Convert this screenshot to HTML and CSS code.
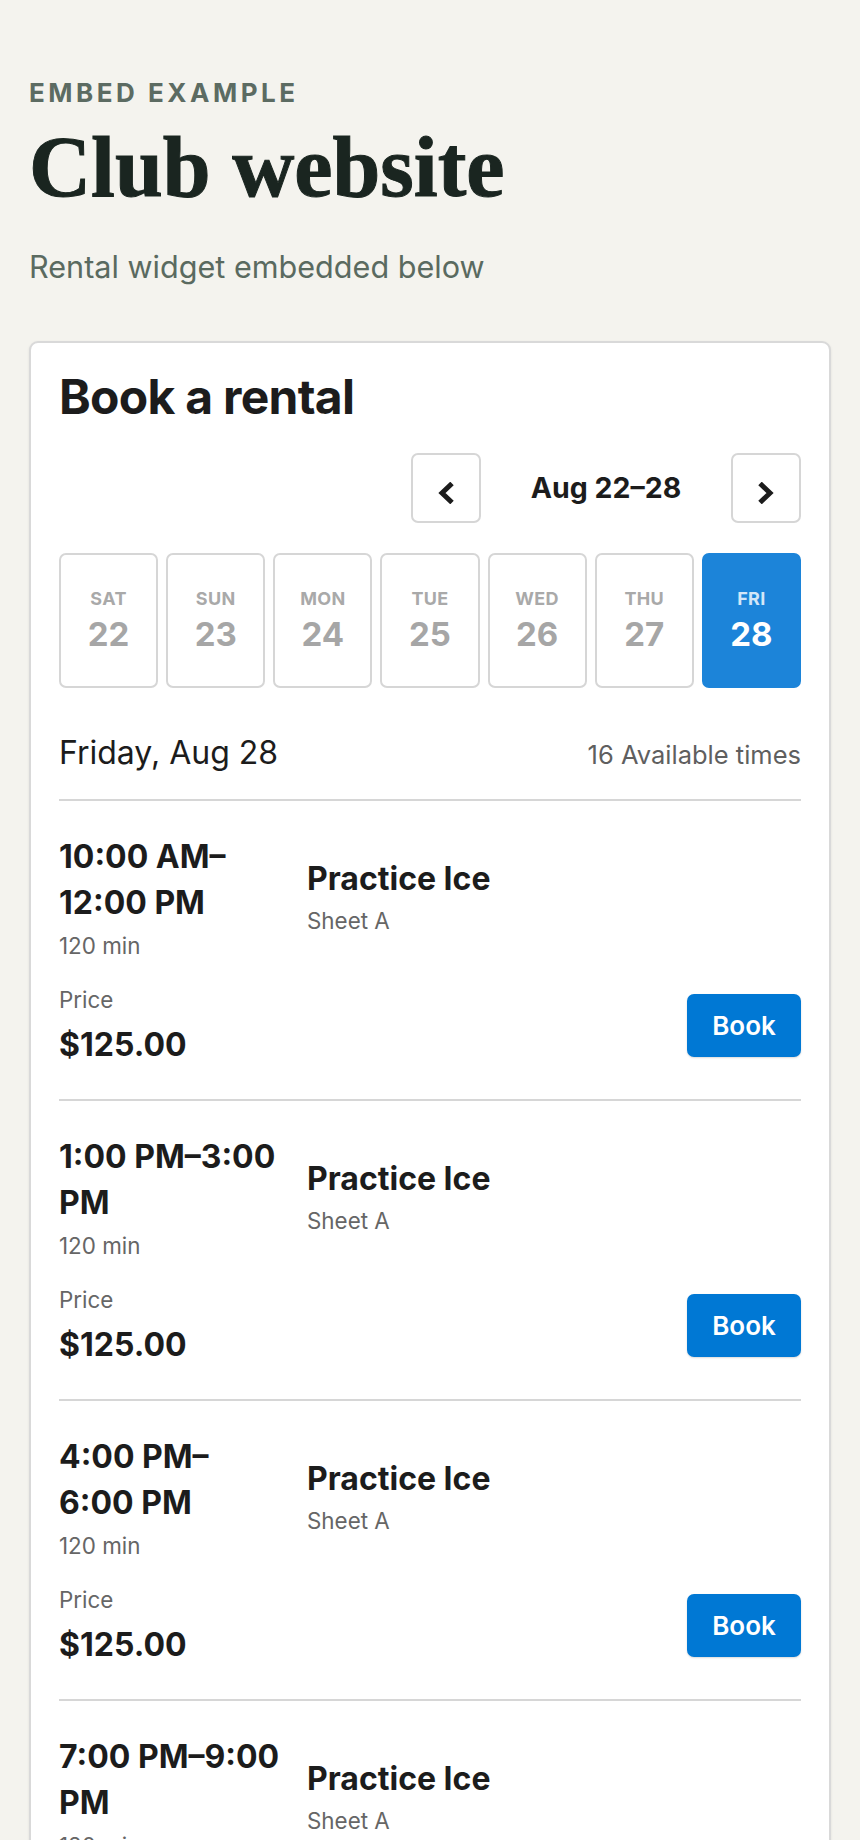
FILE: index.html
```html
<!DOCTYPE html>
<html lang="en">
<head>
    <meta charset="UTF-8">
    <meta name="viewport" content="width=device-width, initial-scale=1.0">
    <title>Club website</title>
    <link rel="stylesheet" href="styles.css">
</head>
<body>
    <header class="site-header">
        <p class="eyebrow">Embed example</p>
        <h1 class="site-title">Club website</h1>
        <p class="lead">Rental widget embedded below</p>
    </header>

    <section class="widget">
        <h2 class="widget-title">Book a rental</h2>

        <div class="week-nav">
            <button class="nav-btn" aria-label="Previous week">
                <svg width="18" height="22" viewBox="0 0 18 22"><path d="M15 1.5 L5 11 L15 20.5" fill="none" stroke="#1c1c1c" stroke-width="5"/></svg>
            </button>
            <div class="week-label">Aug 22–28</div>
            <button class="nav-btn" aria-label="Next week">
                <svg width="18" height="22" viewBox="0 0 18 22"><path d="M3 1.5 L13 11 L3 20.5" fill="none" stroke="#1c1c1c" stroke-width="5"/></svg>
            </button>
        </div>

        <div class="days">
            <button class="day"><span class="day-name">SAT</span><span class="day-num">22</span></button>
            <button class="day"><span class="day-name">SUN</span><span class="day-num">23</span></button>
            <button class="day"><span class="day-name">MON</span><span class="day-num">24</span></button>
            <button class="day"><span class="day-name">TUE</span><span class="day-num">25</span></button>
            <button class="day"><span class="day-name">WED</span><span class="day-num">26</span></button>
            <button class="day"><span class="day-name">THU</span><span class="day-num">27</span></button>
            <button class="day selected"><span class="day-name">FRI</span><span class="day-num">28</span></button>
        </div>

        <div class="day-head">
            <h3 class="day-title">Friday, Aug 28</h3>
            <span class="avail">16 Available times</span>
        </div>

        <div class="slot">
            <div class="slot-main">
                <div>
                    <div class="slot-time">10:00 AM–12:00 PM</div>
                    <div class="slot-length">120 min</div>
                </div>
                <div>
                    <div class="slot-name">Practice Ice</div>
                    <div class="slot-sheet">Sheet A</div>
                </div>
            </div>
            <div class="slot-foot">
                <div>
                    <div class="price-label">Price</div>
                    <div class="price">$125.00</div>
                </div>
                <button class="book-btn">Book</button>
            </div>
        </div>

        <div class="slot">
            <div class="slot-main">
                <div>
                    <div class="slot-time">1:00 PM–3:00 PM</div>
                    <div class="slot-length">120 min</div>
                </div>
                <div>
                    <div class="slot-name">Practice Ice</div>
                    <div class="slot-sheet">Sheet A</div>
                </div>
            </div>
            <div class="slot-foot">
                <div>
                    <div class="price-label">Price</div>
                    <div class="price">$125.00</div>
                </div>
                <button class="book-btn">Book</button>
            </div>
        </div>

        <div class="slot">
            <div class="slot-main">
                <div>
                    <div class="slot-time">4:00 PM–6:00 PM</div>
                    <div class="slot-length">120 min</div>
                </div>
                <div>
                    <div class="slot-name">Practice Ice</div>
                    <div class="slot-sheet">Sheet A</div>
                </div>
            </div>
            <div class="slot-foot">
                <div>
                    <div class="price-label">Price</div>
                    <div class="price">$125.00</div>
                </div>
                <button class="book-btn">Book</button>
            </div>
        </div>

        <div class="slot">
            <div class="slot-main">
                <div>
                    <div class="slot-time">7:00 PM–9:00 PM</div>
                    <div class="slot-length">120 min</div>
                </div>
                <div>
                    <div class="slot-name">Practice Ice</div>
                    <div class="slot-sheet">Sheet A</div>
                </div>
            </div>
            <div class="slot-foot">
                <div>
                    <div class="price-label">Price</div>
                    <div class="price">$125.00</div>
                </div>
                <button class="book-btn">Book</button>
            </div>
        </div>
    </section>
</body>
</html>
```

FILE: styles.css
```css
body {
    margin: 0;
    padding: 77px 29px 40px;
    background-color: #f4f3ee;
    font-family: Inter, "Noto Sans", Arial, sans-serif;
    color: #1c1c1c;
}
.eyebrow {
    margin: 0;
    font-size: 26px;
    line-height: 32px;
    font-weight: 700;
    letter-spacing: 0.135em;
    text-transform: uppercase;
    color: #5c6b62;
}
.site-title {
    margin: 10px 0 0;
    font-family: "Liberation Serif", "Times New Roman", serif;
    font-size: 86px;
    line-height: 96px;
    font-weight: 700;
    color: #1a2520;
    -webkit-text-stroke: 1px #1a2520;
}
.lead {
    margin: 32px 0 0;
    font-size: 30.6px;
    line-height: 40px;
    color: #5a6a60;
}
.widget {
    margin-top: 54px;
    background-color: white;
    border: 2px solid #d9d9d9;
    border-radius: 9px;
    padding: 25px 28px 28px;
    box-shadow: 0 1px 3px rgba(0, 0, 0, 0.08);
}
.widget-title {
    margin: 0;
    font-size: 48px;
    line-height: 58px;
    font-weight: 700;
    letter-spacing: -0.015em;
}
button {
    font-family: inherit;
    cursor: pointer;
}
.week-nav {
    display: flex;
    justify-content: flex-end;
    align-items: center;
    margin-top: 27px;
}
.nav-btn {
    width: 70px;
    height: 70px;
    box-sizing: border-box;
    padding: 0;
    border: 2px solid #d6d6d6;
    border-radius: 7px;
    background-color: white;
    display: flex;
    align-items: center;
    justify-content: center;
}
.nav-btn svg {
    margin-top: 10px;
}
.week-label {
    width: 250px;
    text-align: center;
    font-size: 28.5px;
    line-height: 34px;
    font-weight: 700;
}
.days {
    display: grid;
    grid-template-columns: repeat(7, 1fr);
    gap: 8px;
    margin-top: 30px;
}
.day {
    display: flex;
    flex-direction: column;
    align-items: center;
    padding: 33px 0 32px;
    border: 2px solid #d6d6d6;
    border-radius: 7px;
    background-color: white;
}
.day-name {
    font-size: 18px;
    line-height: 22px;
    font-weight: 700;
    letter-spacing: 0.02em;
    color: #a9a9a9;
}
.day-num {
    margin-top: 4px;
    font-size: 33px;
    line-height: 40px;
    font-weight: 700;
    color: #a6a6a6;
}
.day.selected {
    background-color: #1c84d9;
    border-color: #1c84d9;
}
.day.selected .day-name {
    color: #d2e6f8;
}
.day.selected .day-num {
    color: white;
}
.day-head {
    display: flex;
    justify-content: space-between;
    align-items: baseline;
    margin-top: 45px;
    padding-bottom: 26px;
    border-bottom: 2px solid #d6d6d6;
}
.day-title {
    margin: 0;
    font-size: 32px;
    line-height: 40px;
    font-weight: 400;
}
.avail {
    font-size: 25.5px;
    color: #5f5f5f;
}
.slot {
    padding: 33px 0 34px;
    border-bottom: 2px solid #d6d6d6;
}
.slot-main {
    display: grid;
    grid-template-columns: 222px 1fr;
    column-gap: 26px;
    align-items: center;
}
.slot-time {
    font-size: 32px;
    line-height: 46px;
    font-weight: 700;
}
.slot-length, .slot-sheet, .price-label {
    font-size: 22.4px;
    line-height: 30px;
    color: #666;
}
.slot-length {
    margin-top: 5px;
}
.slot-name {
    font-size: 32px;
    line-height: 40px;
    font-weight: 700;
}
.slot-sheet {
    margin-top: 7px;
}
.slot-foot {
    display: flex;
    justify-content: space-between;
    align-items: center;
    margin-top: 24px;
}
.price {
    margin-top: 10px;
    font-size: 32px;
    line-height: 40px;
    font-weight: 700;
}
.book-btn {
    width: 114px;
    height: 63px;
    border: none;
    border-radius: 7px;
    background-color: #0078d4;
    color: white;
    font-size: 26px;
    font-weight: 600;
    box-shadow: 0 1px 2px rgba(0, 0, 0, 0.15);
}
```
